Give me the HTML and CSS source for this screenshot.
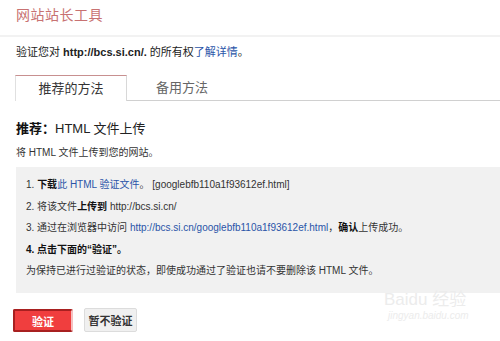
FILE: index.html
```html
<!DOCTYPE html>
<html lang="zh-CN">
<head>
  <meta charset="UTF-8" />
  <title>网站站长工具</title>
  <link rel="stylesheet" href="styles.css">
</head>
<body>

  <div class="header">
    <h1 class="logo">网站站长工具</h1>
  </div>

  <div class="page">
    <p class="intro">验证您对 <b>http://bcs.si.cn/.</b> 的所有权<a href="#">了解详情</a>。</p>

    <div class="tabs">
      <div class="tab active">推荐的方法</div>
      <div class="tab">备用方法</div>
      <div class="tab-rest"></div>
    </div>

    <h2 class="method">推荐：<span>HTML 文件上传</span></h2>
    <p class="desc">将 HTML 文件上传到您的网站。</p>

    <div class="steps">
      <p>1. <b>下载</b><a href="#">此 HTML 验证文件</a>。 [googlebfb110a1f93612ef.html]</p>
      <p>2. 将该文件<b>上传到</b> http://bcs.si.cn/</p>
      <p>3. 通过在浏览器中访问 <a href="#">http://bcs.si.cn/googlebfb110a1f93612ef.html</a>，<b>确认</b>上传成功。</p>
      <p><b>4. 点击下面的“验证”。</b></p>
      <p class="note">为保持已进行过验证的状态，即使成功通过了验证也请不要删除该 HTML 文件。</p>
    </div>

    <div class="actions">
      <button class="btn verify">验证</button>
      <button class="btn later">暂不验证</button>
    </div>
  </div>

  <div class="watermark">
    <div class="wm-main">Bai<span>du</span> 经验</div>
    <div class="wm-sub">jingyan.baidu.com</div>
  </div>

</body>
</html>
```

FILE: styles.css
```css
body {
  margin: 0;
  font-family: "Liberation Sans", Arial, "Noto Sans CJK SC", sans-serif;
  font-size: 12px;
  color: #222;
  background-color: #fff;
  width: 500px;
  height: 341px;
  overflow: hidden;
  position: relative;
}

.header {
  height: 35px;
  border-bottom: 2px solid #f2f2f2;
  padding-left: 16px;
}

.logo {
  margin: 0;
  padding-top: 6px;
  font-size: 14px;
  font-weight: normal;
  letter-spacing: 0.5px;
  color: #c87272;
  line-height: 18px;
}

.page {
  padding-left: 16px;
}

.intro {
  margin: 0;
  padding-top: 7px;
  line-height: 16px;
  font-size: 11px;
}

a {
  color: #2a54a8;
  text-decoration: none;
}

.tabs {
  display: flex;
  margin-top: 15px;
  margin-left: -1px;
  height: 26px;
}

.tab {
  width: 110px;
  text-align: center;
  font-size: 13px;
  line-height: 25px;
  color: #666;
  border-bottom: 1px solid #d0d0d0;
}

.tab.active {
  color: #333;
  border-top: 1px solid #c89090;
  border-left: 1px solid #e0e0e0;
  border-right: 1px solid #d8d8d8;
  border-bottom: none;
  background-color: #fff;
}

.tab-rest {
  flex: 1;
  border-bottom: 1px solid #d0d0d0;
}

.method {
  margin: 0;
  padding-top: 19px;
  font-size: 13px;
  line-height: 18px;
  color: #111;
}

.method span {
  font-weight: normal;
  color: #222;
}

.desc {
  margin: 0;
  padding-top: 7px;
  line-height: 16px;
  font-size: 10px;
  color: #333;
}

.steps {
  margin-top: 6px;
  background-color: #f1f1f1;
  padding: 7px 10px 17px;
  height: 102px;
}

.steps p {
  margin: 0;
  font-size: 10px;
  line-height: 21.5px;
  color: #333;
  white-space: nowrap;
}

.steps b {
  color: #111;
}

.actions {
  display: flex;
  gap: 11px;
  margin-top: 16px;
  margin-left: -3px;
}

.btn {
  font-family: "Liberation Sans", "Noto Sans CJK SC", sans-serif;
  font-size: 11px;
  font-weight: bold;
  height: 23px;
  padding: 0;
  white-space: nowrap;
  border-radius: 2px;
  cursor: pointer;
}

.verify {
  width: 60px;
  background-color: #f03e3e;
  color: #fff;
  border: 2px solid #a82020;
  border-right-color: #f5c0c0;
}

.later {
  width: 53px;
  background-color: #f0f0f0;
  color: #333;
  border: 1px solid #dcdcdc;
  height: 24px;
  margin-top: -1px;
}

.watermark {
  position: absolute;
  left: 384px;
  top: 290px;
  color: #ececec;
  font-family: "Liberation Sans", "Noto Sans CJK SC", sans-serif;
}

.wm-main {
  font-size: 17px;
  line-height: 20px;
}

.wm-sub {
  font-size: 10px;
  font-style: italic;
  padding-left: 4px;
}
```
